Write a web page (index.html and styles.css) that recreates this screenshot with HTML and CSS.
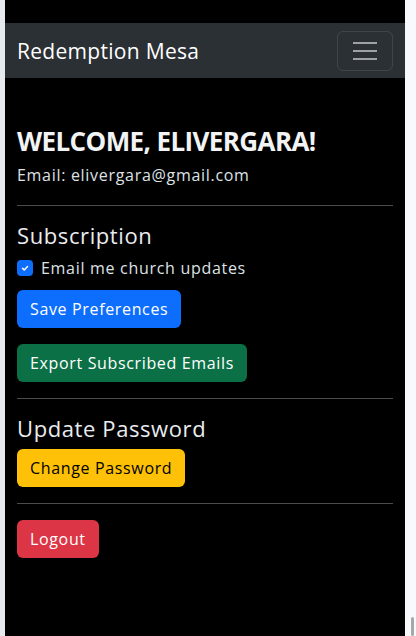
FILE: index.html
```html
<!DOCTYPE html>
<html lang="en">
<head>
<meta charset="utf-8">
<title>Redemption Mesa</title>
<link rel="stylesheet" href="styles.css">
</head>
<body>
<div class="app">
  <nav class="navbar">
    <span class="brand">Redemption Mesa</span>
    <button class="toggler" aria-label="Toggle navigation">
      <svg width="30" height="30" viewBox="0 0 30 30"><path d="M3 7h24M3 15h24M3 23h24" stroke="rgba(255,255,255,0.55)" stroke-width="2" stroke-linecap="butt"/></svg>
    </button>
  </nav>
  <main class="content">
    <h2 class="welcome">WELCOME, ELIVERGARA!</h2>
    <p class="email">Email: elivergara@gmail.com</p>
    <hr>
    <h4 class="section-title">Subscription</h4>
    <label class="check">
      <span class="check-box"><svg width="10" height="10" viewBox="0 0 20 20"><path d="M5 10.5l3.5 3.5 6.5-7" fill="none" stroke="#fff" stroke-width="3" stroke-linecap="round" stroke-linejoin="round"/></svg></span>
      <span>Email me church updates</span>
    </label>
    <div class="actions">
      <button class="btn btn-primary">Save Preferences</button>
      <button class="btn btn-success">Export Subscribed Emails</button>
    </div>
    <hr>
    <h4 class="section-title">Update Password</h4>
    <div class="actions">
      <button class="btn btn-warning">Change Password</button>
    </div>
    <hr>
    <div class="actions">
      <button class="btn btn-danger">Logout</button>
    </div>
  </main>
  <div class="scroll-thumb"></div>
</div>
</body>
</html>
```
FILE: styles.css
```css
html, body {
  margin: 0;
  padding: 0;
}
body {
  background: #f8f9fc;
  border-left: 5px solid #e6eaef;
  min-height: 636px;
  box-sizing: border-box;
  font-family: "Open Sans", "Noto Sans", sans-serif;
  color: #dee2e6;
  letter-spacing: 0.7px;
}
.app {
  width: 400px;
  min-height: 636px;
  background: #000;
  padding-top: 23px;
  box-sizing: border-box;
}
.navbar {
  background: #2b3035;
  height: 55px;
  padding: 0 12px;
  display: flex;
  align-items: center;
  justify-content: space-between;
}
.brand {
  font-size: 21px;
  letter-spacing: 0.3px;
  color: #fff;
}
.toggler {
  width: 56px;
  height: 40px;
  border: 1px solid rgba(255,255,255,0.1);
  border-radius: 6px;
  background: transparent;
  display: flex;
  align-items: center;
  justify-content: center;
  padding: 0;
}
.content {
  padding: 49px 12px 0;
}
.welcome {
  margin: 0 0 8px;
  font-size: 26px;
  line-height: 28px;
  font-weight: 700;
  letter-spacing: -0.6px;
  color: #f1f3f5;
}
.email {
  margin: 0 0 18px;
  font-size: 16px;
  line-height: 24px;
}
hr {
  border: 0;
  border-top: 1px solid #4a4d50;
  margin: 16px 0;
}
.section-title {
  margin: 0 0 8px;
  font-size: 22px;
  line-height: 26px;
  font-weight: 400;
  letter-spacing: 0.6px;
  color: #e9ecef;
}
.check {
  display: flex;
  align-items: center;
  gap: 8px;
  font-size: 16px;
  line-height: 24px;
  margin-bottom: 10px;
}
.check-box {
  width: 16px;
  height: 16px;
  border-radius: 4px;
  background: #0d6efd;
  display: flex;
  align-items: center;
  justify-content: center;
}
.actions {
  display: flex;
  flex-direction: column;
  align-items: flex-start;
  gap: 16px;
}
.btn {
  font-family: inherit;
  font-size: 16px;
  line-height: 24px;
  letter-spacing: 0.65px;
  padding: 6px 12px;
  border: 1px solid transparent;
  border-radius: 6px;
  cursor: pointer;
}
.btn-primary { background: #0d6efd; color: #fff; }
.btn-success { background: #0b7046; color: #fff; }
.btn-warning { background: #ffc107; color: #000; }
.btn-danger { background: #dc3545; color: #fff; }
.scroll-thumb {
  position: fixed;
  right: 2px;
  top: 617px;
  width: 3px;
  height: 19px;
  background: #a8a8a8;
  border-radius: 2px;
}
```
